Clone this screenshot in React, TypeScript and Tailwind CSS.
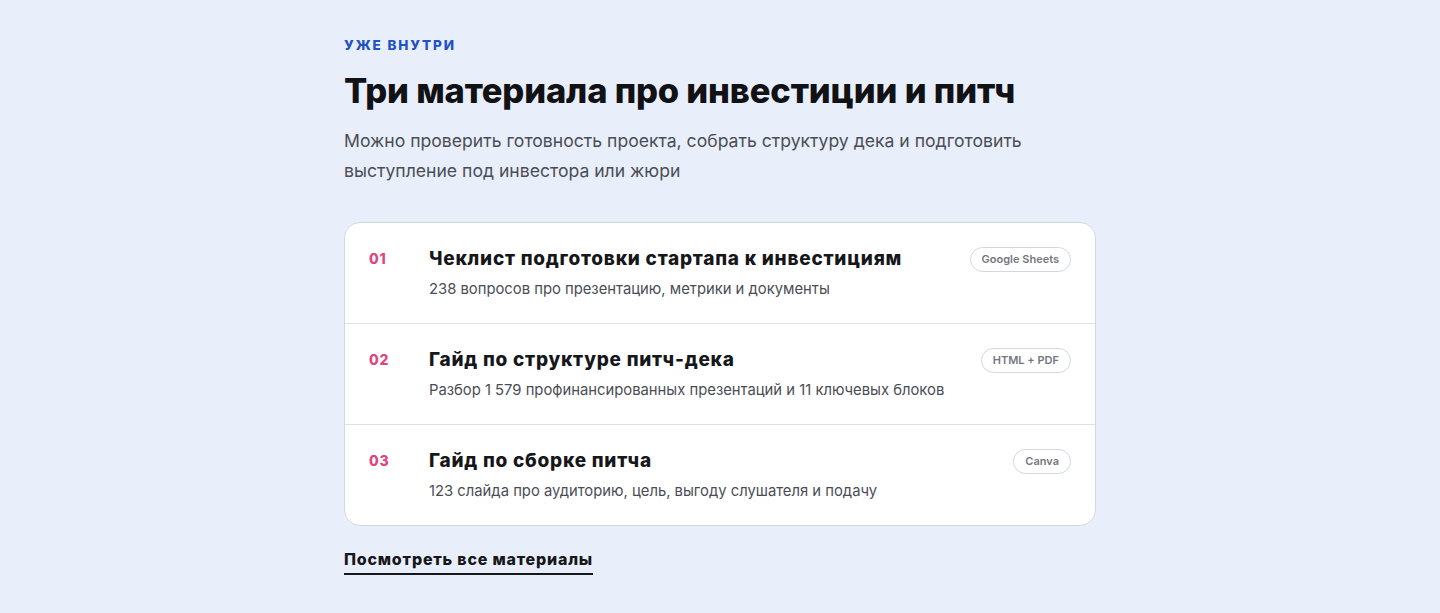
import React from 'react'

type Material = {
  num: string
  title: string
  text: string
  tag: string
}

const materials: Material[] = [
  {
    num: '01',
    title: 'Чеклист подготовки стартапа к инвестициям',
    text: '238 вопросов про презентацию, метрики и документы',
    tag: 'Google Sheets',
  },
  {
    num: '02',
    title: 'Гайд по структуре питч-дека',
    text: 'Разбор 1 579 профинансированных презентаций и 11 ключевых блоков',
    tag: 'HTML + PDF',
  },
  {
    num: '03',
    title: 'Гайд по сборке питча',
    text: '123 слайда про аудиторию, цель, выгоду слушателя и подачу',
    tag: 'Canva',
  },
]

function MaterialRow({ item }: { item: Material }) {
  return (
    <div className="flex items-start px-6 pt-6 pb-[23px] border-b border-[#dde1e8] last:border-b-0">
      <div className="w-[60px] shrink-0 pt-[1px] text-[14px] font-extrabold tracking-[0.06em] text-[#e0457f]">
        {item.num}
      </div>
      <div className="flex-1 min-w-0">
        <div className="text-[19px] leading-[24px] font-extrabold tracking-[0.04em] text-[#16171a]">
          {item.title}
        </div>
        <div className="mt-[7px] text-[14.8px] leading-[22px] text-[#4a4d55]">{item.text}</div>
      </div>
      <div className="shrink-0 rounded-full border border-[#d4d7dd] px-[11px] h-[25px] flex items-center text-[11px] font-semibold text-[#74777e]">
        {item.tag}
      </div>
    </div>
  )
}

export default function App() {
  return (
    <div
      className="min-h-[613px] bg-[#e9effa] flex justify-center"
      style={{ fontFamily: 'Inter, "Noto Sans", sans-serif' }}
    >
      <div className="w-[752px] pt-[37px]">
        <div className="text-[13.5px] leading-[16px] font-extrabold tracking-[0.14em] text-[#1f52c4]">
          УЖЕ ВНУТРИ
        </div>
        <h2 className="mt-[16px] text-[34.5px] leading-[44px] font-extrabold tracking-[-0.005em] text-[#111216]">
          Три материала про инвестиции и питч
        </h2>
        <p className="mt-[13px] text-[17.6px] leading-[30px] text-[#4a4d55] max-w-[700px]">
          Можно проверить готовность проекта, собрать структуру дека и подготовить выступление под
          инвестора или жюри
        </p>

        <div className="mt-[36px] rounded-[16px] border border-[#d3d8e0] bg-white overflow-hidden">
          {materials.map((m) => (
            <MaterialRow key={m.num} item={m} />
          ))}
        </div>

        <a
          href="#"
          className="inline-block mt-[23px] pb-[4px] border-b-2 border-[#16171a] text-[16px] leading-[20px] font-extrabold tracking-[0.05em] text-[#16171a]"
        >
          Посмотреть все материалы
        </a>
      </div>
    </div>
  )
}
